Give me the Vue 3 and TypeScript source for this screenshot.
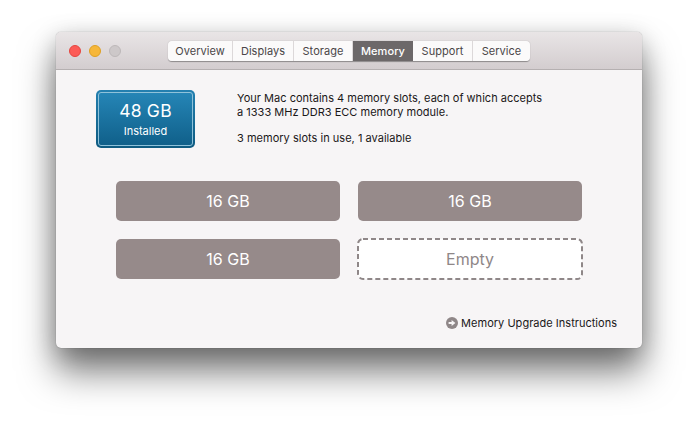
<script setup lang="ts">
const tabs: { label: string; width: number; active?: boolean }[] = [
  { label: 'Overview', width: 65 },
  { label: 'Displays', width: 61 },
  { label: 'Storage', width: 59 },
  { label: 'Memory', width: 60, active: true },
  { label: 'Support', width: 60 },
  { label: 'Service', width: 57 },
]
const slots = ['16 GB', '16 GB', '16 GB', 'Empty']
</script>

<template>
  <div class="stage">
    <div class="window">
      <header class="titlebar">
        <div class="lights">
          <span class="light red"></span>
          <span class="light yellow"></span>
          <span class="light grey"></span>
        </div>
        <nav class="tabs">
          <button
            v-for="tab in tabs"
            :key="tab.label"
            class="tab"
            :class="{ active: tab.active }"
            :style="{ width: tab.width + 'px' }"
          >{{ tab.label }}</button>
        </nav>
      </header>
      <main class="body">
        <section class="summary">
          <div class="capacity">
            <div class="capacity-inner">
              <span class="amount">48 GB</span>
              <span class="installed">Installed</span>
            </div>
          </div>
          <div class="desc">
            <p>Your Mac contains 4 memory slots, each of which accepts<br />a 1333 MHz DDR3 ECC memory module.</p>
            <p>3 memory slots in use, 1 available</p>
          </div>
        </section>
        <section class="slots">
          <div
            v-for="(slot, i) in slots"
            :key="i"
            class="slot"
            :class="{ empty: slot === 'Empty' }"
          >
            <svg v-if="slot === 'Empty'" class="dash" width="224" height="40" viewBox="0 0 224 40">
              <rect x="0" y="0" width="224" height="40" rx="5" fill="none" stroke="#8f8788" stroke-width="2" stroke-dasharray="5 3" />
            </svg>
            <span>{{ slot }}</span>
          </div>
        </section>
        <footer class="footer">
          <svg class="arrow" width="12" height="12" viewBox="0 0 12 12">
            <circle cx="6" cy="6" r="6" fill="#8f8788" />
            <path d="M2.6 5h3V2.9L9.4 6 5.6 9.1V7h-3z" fill="#f7f5f6" />
          </svg>
          <span>Memory Upgrade Instructions</span>
        </footer>
      </main>
    </div>
  </div>
</template>

<style>
html, body { margin: 0; background: #fff; }
</style>

<style scoped>
.stage {
  width: 698px;
  height: 428px;
  box-sizing: border-box;
  padding: 32px 56px 0;
  background: #fff;
  overflow: hidden;
  font-family: Inter, "Liberation Sans", sans-serif;
}
.window {
  width: 586px;
  height: 316px;
  border-radius: 5px;
  background: #f7f5f6;
  overflow: hidden;
  display: flex;
  flex-direction: column;
  box-shadow: 0 0 1px rgba(0, 0, 0, 0.45), 0 24px 36px rgba(0, 0, 0, 0.5), 0 6px 24px rgba(0, 0, 0, 0.22);
}
.titlebar {
  height: 37px;
  box-sizing: content-box;
  flex: none;
  display: flex;
  align-items: center;
  background: linear-gradient(#e9e5e6, #d3cdcf);
  border-bottom: 1px solid #b5b0b1;
}
.lights {
  display: flex;
  gap: 8px;
  padding-left: 13px;
  margin-top: 1px;
  width: 99px;
  box-sizing: border-box;
  flex: none;
}
.light {
  width: 12px;
  height: 12px;
  border-radius: 50%;
  box-sizing: border-box;
}
.red { background: #fc5b57; border: 1px solid #e5453f; }
.yellow { background: #f6b73a; border: 1px solid #dfa023; }
.grey { background: #cdc8c9; border: 1px solid #bdb8b9; }
.tabs {
  display: flex;
  height: 20px;
  margin-left: 13px;
  margin-top: 1px;
  border-radius: 4px;
  overflow: hidden;
  box-shadow: 0 0.5px 1px rgba(0, 0, 0, 0.35);
}
.tab {
  height: 20px;
  padding: 0;
  border: 0;
  border-right: 1px solid #dcd8d9;
  background: #fbfafa;
  color: #4a4647;
  font: 11px Inter, "Liberation Sans", sans-serif;
  letter-spacing: 0.05px;
  box-sizing: border-box;
}
.tab:last-child { border-right: 0; }
.tab.active {
  background: #6c6869;
  border-right: 0;
  color: #fff;
  font-weight: 500;
}
.body {
  flex: 1;
  display: flex;
  flex-direction: column;
  min-height: 0;
}
.summary {
  display: flex;
  padding: 20px 0 0 40px;
  height: 58px;
}
.capacity {
  width: 99px;
  height: 58px;
  box-sizing: border-box;
  padding: 2px;
  border-radius: 5px;
  background: linear-gradient(#2480b0, #0e5a80);
}
.capacity-inner {
  height: 100%;
  box-sizing: border-box;
  border: 1px solid #8fc2da;
  border-radius: 3px;
  background: linear-gradient(#2585b6, #10608a);
  color: #fff;
  display: flex;
  flex-direction: column;
  align-items: center;
  padding-top: 8px;
}
.amount {
  font-size: 17.5px;
  line-height: 20px;
  letter-spacing: 0.2px;
}
.installed {
  font-size: 11px;
  line-height: 15px;
  margin-top: 3px;
}
.desc {
  margin-left: 42px;
  padding-top: 1px;
  color: #1a1718;
  font-size: 11px;
  line-height: 14px;
  letter-spacing: 0.02px;
}
.desc p { margin: 0 0 12px; }
.slots {
  display: grid;
  grid-template-columns: 224px 224px;
  grid-auto-rows: 40px;
  gap: 18px;
  margin: 33px 0 0 60px;
}
.slot {
  position: relative;
  border-radius: 5px;
  background: #968a8a;
  color: #fff;
  display: flex;
  align-items: center;
  justify-content: center;
  font-size: 16px;
}
.slot.empty {
  background: #fff;
  color: #8f8788;
}
.dash {
  position: absolute;
  top: 0;
  left: 0;
  overflow: visible;
}
.footer {
  margin: 37px 25px 0 0;
  display: flex;
  align-items: center;
  justify-content: flex-end;
  gap: 3px;
  color: #1a1718;
  font-size: 11px;
  line-height: 14px;
  letter-spacing: 0.02px;
}
.arrow { flex: none; }
</style>
